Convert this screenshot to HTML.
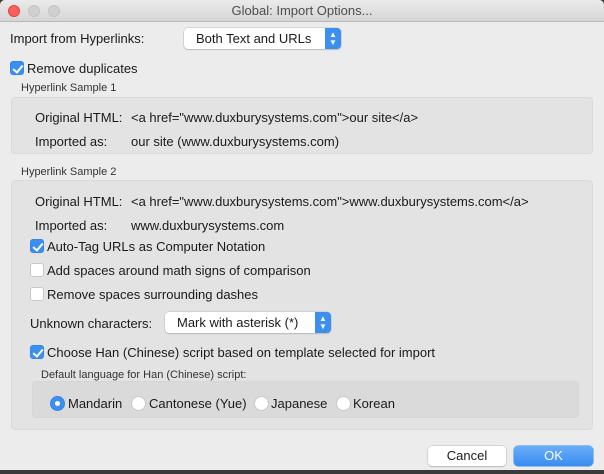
<!DOCTYPE html>
<html><head><style>
*{margin:0;padding:0;box-sizing:border-box}
body{width:604px;height:474px;background:#3a3a3a;font-family:"Liberation Sans",sans-serif;font-size:13px;color:#1a1a1a;position:relative;overflow:hidden}
.win{position:absolute;left:0;top:0;width:604px;height:470px;background:#ececec;border-radius:5px 5px 0 0;overflow:hidden}
.tb{position:absolute;left:0;top:0;width:604px;height:22px;background:linear-gradient(#ebebeb,#d5d5d5);border-bottom:1px solid #b9b9b9;text-align:center;line-height:22px;color:#4d4d4d;font-size:13px}
.dot{position:absolute;top:5px;width:12px;height:12px;border-radius:50%;background:#d0d0d0;border:1px solid #c4c4c4}
.a{position:absolute;white-space:nowrap}
.box{position:absolute;background:#e3e3e3;border:1px solid #dadada;border-radius:4px}
.sm{font-size:11px;color:#333}
.cb{position:absolute;width:14px;height:14px;border-radius:3px;background:#fff;border:1px solid #c8c8c8}
.cb.on{background:#3b8ff0;border-color:#3585e6}
.cb.on:after{content:"";position:absolute;left:4px;top:1px;width:4px;height:8px;border:solid #fff;border-width:0 2px 2px 0;transform:rotate(40deg)}
.pop{position:absolute;height:21px;background:#fff;border-radius:4px;box-shadow:0 0 0 .5px #bbb,0 1px 1px #bbb;line-height:21px;padding-left:12px}
.pop i{position:absolute;right:0;top:0;width:16px;height:21px;background:#3b8ff0;border-radius:0 4px 4px 0;color:#fff;font-style:normal;font-size:8px;line-height:8px;text-align:center;padding-top:3px}
.rb{position:absolute;width:15px;height:15px;border-radius:50%;background:#fff;border:1px solid #c8c8c8}
.rb.on{background:#3b8ff0;border-color:#3585e6}
.rb.on:after{content:"";position:absolute;left:4px;top:4px;width:5px;height:5px;border-radius:50%;background:#fff}
.btn{position:absolute;height:20px;border-radius:4px;text-align:center;line-height:20px;background:#fff;box-shadow:0 0 0 .5px #bbb,0 1px 1px #bbb}
</style></head><body>
<div class="win">
<div class="tb">Global: Import Options...</div>
<div class="dot" style="left:8px;background:#fc605c;border-color:#e2463f"></div>
<div class="dot" style="left:28px"></div>
<div class="dot" style="left:48px"></div>

<div class="a" style="left:10px;top:31px">Import from Hyperlinks:</div>
<div class="pop" style="left:184px;top:28px;width:157px">Both Text and URLs<i>▲<br>▼</i></div>

<div class="cb on" style="left:10px;top:61px"></div>
<div class="a" style="left:27px;top:61px">Remove duplicates</div>

<div class="a sm" style="left:21px;top:82px">Hyperlink Sample 1</div>
<div class="box" style="left:11px;top:97px;width:582px;height:57px"></div>
<div class="a" style="left:35px;top:110px">Original HTML:</div>
<div class="a" style="left:131px;top:110px">&lt;a href="www.duxburysystems.com"&gt;our site&lt;/a&gt;</div>
<div class="a" style="left:35px;top:134px">Imported as:</div>
<div class="a" style="left:131px;top:134px">our site (www.duxburysystems.com)</div>

<div class="a sm" style="left:21px;top:166px">Hyperlink Sample 2</div>
<div class="box" style="left:11px;top:180px;width:582px;height:250px"></div>
<div class="a" style="left:35px;top:194px">Original HTML:</div>
<div class="a" style="left:131px;top:194px">&lt;a href="www.duxburysystems.com"&gt;www.duxburysystems.com&lt;/a&gt;</div>
<div class="a" style="left:35px;top:218px">Imported as:</div>
<div class="a" style="left:131px;top:218px">www.duxburysystems.com</div>

<div class="cb on" style="left:30px;top:239px"></div>
<div class="a" style="left:47px;top:239px">Auto-Tag URLs as Computer Notation</div>
<div class="cb" style="left:30px;top:263px"></div>
<div class="a" style="left:47px;top:263px">Add spaces around math signs of comparison</div>
<div class="cb" style="left:30px;top:287px"></div>
<div class="a" style="left:47px;top:287px">Remove spaces surrounding dashes</div>

<div class="a" style="left:30px;top:316px">Unknown characters:</div>
<div class="pop" style="left:165px;top:312px;width:166px">Mark with asterisk (*)<i>▲<br>▼</i></div>

<div class="cb on" style="left:30px;top:345px"></div>
<div class="a" style="left:47px;top:345px">Choose Han (Chinese) script based on template selected for import</div>
<div class="a sm" style="left:41px;top:369px">Default language for Han (Chinese) script:</div>
<div class="box" style="left:32px;top:381px;width:547px;height:37px;background:#dadada;border-color:#d6d6d6"></div>
<div class="rb on" style="left:50px;top:396px"></div>
<div class="a" style="left:68px;top:396px">Mandarin</div>
<div class="rb" style="left:131px;top:396px"></div>
<div class="a" style="left:149px;top:396px">Cantonese (Yue)</div>
<div class="rb" style="left:254px;top:396px"></div>
<div class="a" style="left:271px;top:396px">Japanese</div>
<div class="rb" style="left:336px;top:396px"></div>
<div class="a" style="left:353px;top:396px">Korean</div>

<div class="btn" style="left:428px;top:446px;width:78px">Cancel</div>
<div class="btn" style="left:514px;top:446px;width:79px;background:linear-gradient(#69aef7,#3a8cf1);color:#fff;box-shadow:0 0 0 .5px #3a86e6">OK</div>
</div>
</body></html>
